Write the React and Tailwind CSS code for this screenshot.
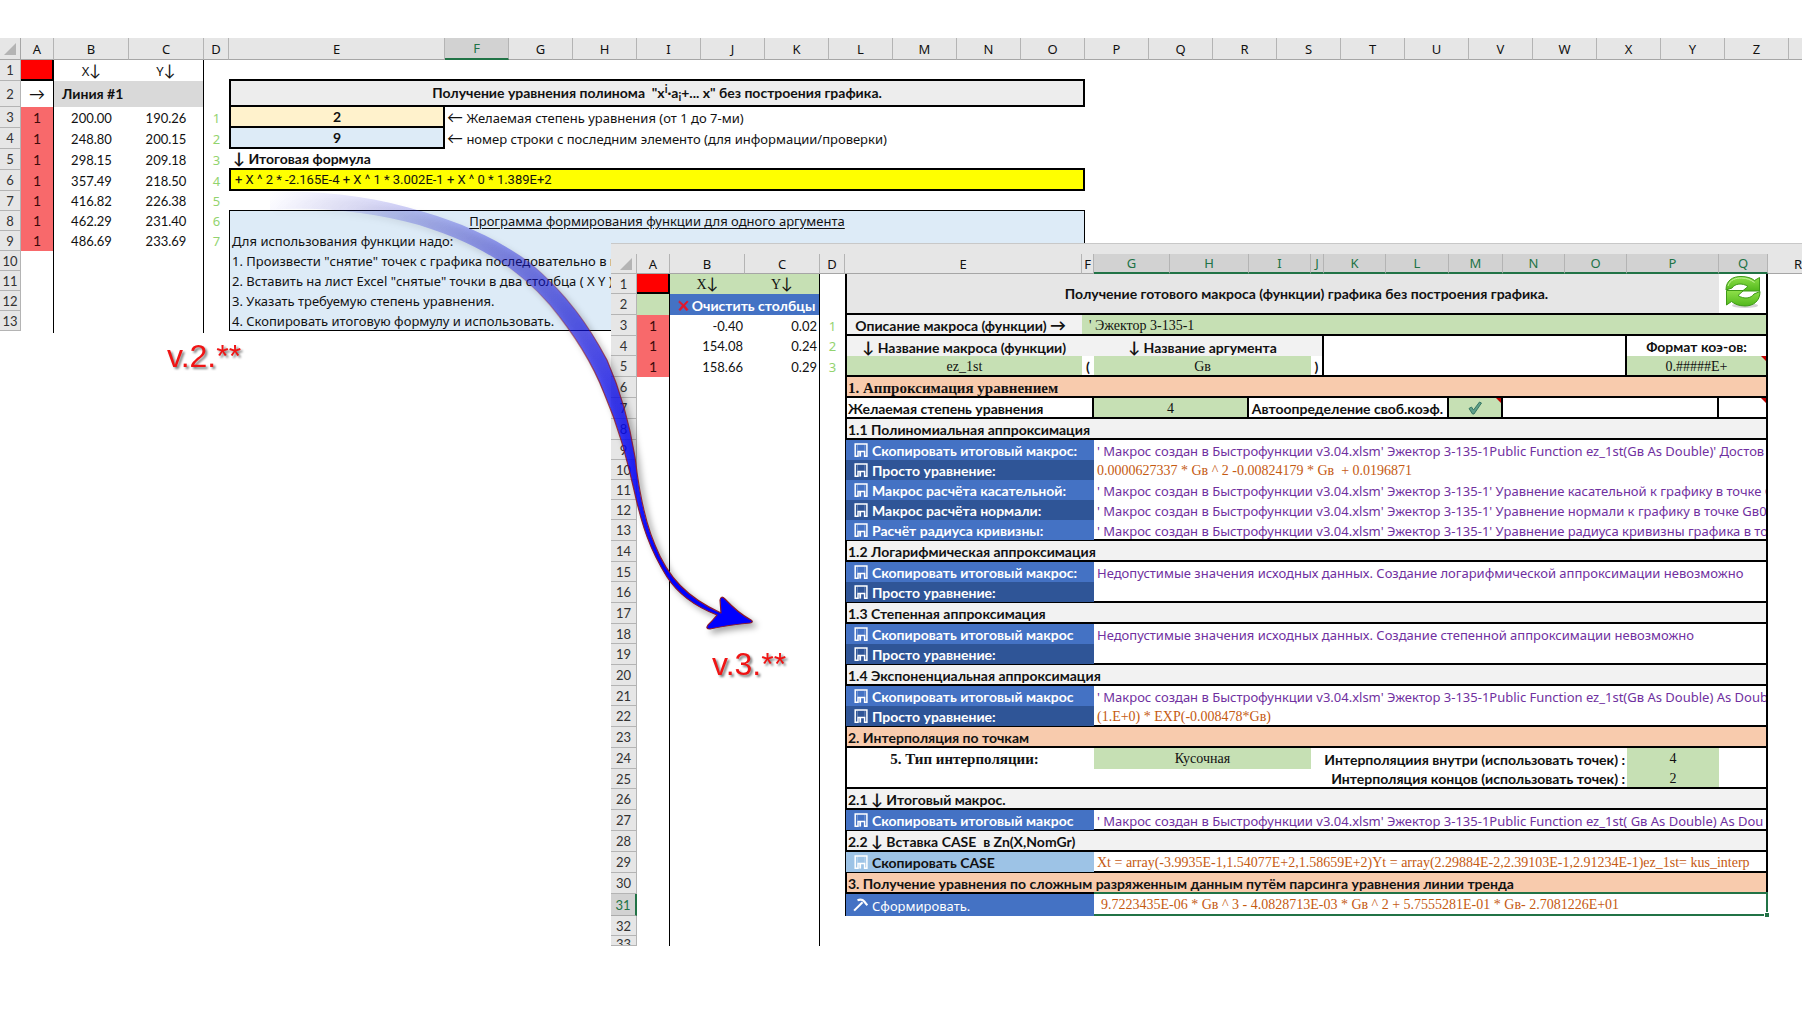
import React from "react";

const SANS = "font-['Noto_Sans','Lato',sans-serif] text-[13px]";
const BOLD = "font-['Lato','Noto_Sans',sans-serif] text-[14px] font-bold";
const NUM = "font-['Lato','Noto_Sans',sans-serif] text-[13px]";
const SERIF = "font-['Liberation_Serif',serif] text-[14px]";
const SERIF_BOLD = "font-['Liberation_Serif',serif] text-[15px] font-bold";
const K = "border-black ";

const LETTERS = "ABCDEFGHIJKLMNOPQRSTUVWXYZ".split("");

function Floppy() {
  return (
    <svg viewBox="0 0 14 14" className="h-[14px] w-[14px] shrink-0" fill="none" stroke="currentColor" aria-hidden="true">
      <path d="M4 13.200H1.200V0.900H12.900V13.200H10.600V8.600H4Z" strokeWidth="1.500" />
      <path d="M6.200 9V13.600" strokeWidth="1.800" />
      <path d="M3.400 1.500V7.800M10.800 1.500V7.800" strokeWidth="0.800" opacity="0.35" />
    </svg>
  );
}

function Hammer() {
  return (
    <svg viewBox="0 0 16 14" className="-ml-[1px] h-[14px] w-[15px] shrink-0" fill="none" stroke="currentColor" aria-hidden="true">
      <path d="M1.200 13L10.200 4" strokeWidth="2.200" />
      <path d="M4.800 2C8 0.800 10.400 1.400 12 3.200C13.200 4.800 13.800 6 15.400 7.200" strokeWidth="2.400" />
    </svg>
  );
}

function Refresh() {
  return (
    <svg viewBox="0 0 36 34" className="h-[34px] w-[36px]" aria-hidden="true">
      <defs>
        <linearGradient id="leaf" x1="0" y1="0" x2="0" y2="1">
          <stop offset="0" stopColor="#8fe04a" />
          <stop offset="1" stopColor="#52b81c" />
        </linearGradient>
      </defs>
      <ellipse cx="20" cy="30.5" rx="13" ry="2.5" fill="#d4d4d4" />
      <g fill="url(#leaf)" stroke="#3f9a18" strokeWidth="1" strokeLinejoin="round">
        <path d="M1 15C1 5 8 1.500 16 1.500C22 1.500 26.500 3 29.500 5.500L34.500 2.500V16H17.500L23 11.500C17 7.500 10 8.500 7 13Z" />
        <path d="M35 16.500C35 26.500 28 31 20 31C14 31 9.500 29 6.500 26.500L1.500 30V15.500H18.500L13 20.500C19 24.500 26 23.500 29 19Z" />
      </g>
      <path d="M3 11C5 4.500 11 3 16.500 3C22 3 26 5 29.500 7.500" fill="none" stroke="#c3f39a" strokeWidth="1" />
    </svg>
  );
}

function Note() {
  return (
    <svg viewBox="0 0 5 5" className="absolute right-0 top-0 h-[5px] w-[5px]" aria-hidden="true">
      <path d="M0 0H5V5Z" fill="#c00000" />
    </svg>
  );
}

function Corner() {
  return (
    <svg viewBox="0 0 12 12" className="ml-auto mr-1 h-[12px] w-[12px]" aria-hidden="true">
      <path d="M12 0V12H0Z" fill="#b4b4b4" />
    </svg>
  );
}

function Arr({ children }) {
  return <span className="font-['Lato'] text-[16px] leading-none">{children}</span>;
}

function RowHead({ n, h, active }) {
  return (
    <th
      scope="row"
      className={
        "relative overflow-hidden border-b border-r text-center font-normal " + NUM + " " + h +
        (active ? " border-b-[#ababab] border-r-2 border-r-[#217346] bg-[#d2d2d2] text-[#217346]" : " border-[#b4b4b4] bg-[#e6e6e6] text-[#333]")
      }
    >
      {n}
    </th>
  );
}

/* ---------- version 2 sheet ---------- */

const POINTS = [
  ["200.00", "190.26"],
  ["248.80", "200.15"],
  ["298.15", "209.18"],
  ["357.49", "218.50"],
  ["416.82", "226.38"],
  ["462.29", "231.40"],
  ["486.69", "233.69"],
];

const MARK = K + "border-r text-center font-['Lato'] text-[14px] ";

function OldSide({ n, h }) {
  const p = POINTS[n - 3];
  return (
    <>
      <RowHead n={n} h={h} />
      <td className={MARK + (p ? "bg-[#f8696b] text-[#3f0a0a]" : "")}>{p ? "1" : ""}</td>
      <td className={"text-center " + NUM}>{p && p[0]}</td>
      <td className={K + "border-r text-center " + NUM}>{p && p[1]}</td>
      <td className="text-center text-[#92d36e]">{p && n - 2}</td>
    </>
  );
}

const STEPS = [
  [9, "Для использования функции надо:"],
  [10, '1. Произвести "снятие" точек с графика последовательно в п'],
  [11, '2. Вставить на лист Excel "снятые" точки в два столбца ( X Y )'],
  [12, "3. Указать требуемую степень уравнения."],
  [13, "4. Скопировать итоговую формулу и использовать."],
];

function OldSheet() {
  return (
    <table className={"w-full table-fixed border-separate border-spacing-0 whitespace-nowrap leading-4 text-[#111] " + SANS}>
      <colgroup>
        <col className="w-[21px]" />
        <col className="w-[33px]" />
        <col className="w-[75px]" />
        <col className="w-[75px]" />
        <col className="w-[25px]" />
        <col className="w-[216px]" />
        {LETTERS.slice(5).map((l) => (
          <col key={l} className="w-[64px]" />
        ))}
        <col />
      </colgroup>
      <thead>
        <tr>
          <th className="h-[22px] border-b border-r border-[#a6a6a6] bg-[#e6e6e6]"><Corner /></th>
          {LETTERS.map((l) => (
            <th
              key={l}
              scope="col"
              className={
                "border-r text-center font-normal " +
                (l === "F" ? "border-b-2 border-b-[#217346] border-r-[#b4b4b4] bg-[#d2d2d2] text-[#217346]" : "border-b border-b-[#a6a6a6] border-r-[#b4b4b4] bg-[#e6e6e6]")
              }
            >
              {l}
            </th>
          ))}
          <th className="border-b border-[#a6a6a6] bg-[#e6e6e6]" />
        </tr>
      </thead>
      <tbody>
        <tr>
          <RowHead n={1} h="h-[21px]" />
          <td className={K + "border-b-2 border-r-2 bg-[#ff0000]"} />
          <td className="text-center">X<Arr>↓</Arr></td>
          <td className={K + "border-r text-center"}>Y<Arr>↓</Arr></td>
          <td />
          <td colSpan={11} className={K + "border-b-2"} />
        </tr>
        <tr>
          <RowHead n={2} h="h-[26px]" />
          <td className={K + "border-r text-center"}><Arr>→</Arr></td>
          <td colSpan={2} className={K + "border-r bg-[#d9d9d9] pl-2 " + BOLD}>Линия #1</td>
          <td />
          <td colSpan={11} className={K + "border-x-2 border-b-2 bg-[#ededed] text-center " + BOLD}>
            Получение уравнения полинома &nbsp;"x<sup className="text-[11px] leading-none">i</sup>·a<sub className="text-[11px] leading-none">i</sub>+... x" без построения графика.
          </td>
        </tr>
        <tr>
          <OldSide n={3} h="h-[21px]" />
          <td className={K + "border-x-2 border-b-2 bg-[#fff2cc] text-center " + BOLD}>2</td>
          <td colSpan={10} className="pl-[2px]"><Arr>←</Arr> Желаемая степень уравнения (от 1 до 7-ми)</td>
        </tr>
        <tr>
          <OldSide n={4} h="h-[21px]" />
          <td className={K + "border-x-2 border-b-2 bg-[#ddebf7] text-center " + BOLD}>9</td>
          <td colSpan={10} className="pl-[2px]"><Arr>←</Arr> номер строки с последним элементо (для информации/проверки)</td>
        </tr>
        <tr>
          <OldSide n={5} h="h-[21px]" />
          <td colSpan={11} className={K + "border-b-2 pl-1 " + BOLD}><Arr>↓</Arr> Итоговая формула</td>
        </tr>
        <tr>
          <OldSide n={6} h="h-[21px]" />
          <td colSpan={11} className={K + "border-x-2 border-b-2 bg-[#ffff00] pl-1 font-['Roboto'] text-[13px]"}>+ X ^ 2 * -2.165E-4 + X ^ 1 * 3.002E-1 + X ^ 0 * 1.389E+2</td>
        </tr>
        <tr>
          <OldSide n={7} h="h-[20px]" />
          <td colSpan={11} className={K + "border-b"} />
        </tr>
        <tr>
          <OldSide n={8} h="h-[20px]" />
          <td colSpan={11} className={K + "border-x bg-[#ddebf7] text-center underline underline-offset-2"}>Программа формирования функции для одного аргумента</td>
        </tr>
        {STEPS.map(([n, text]) => (
          <tr key={n}>
            <OldSide n={n} h="h-[20px]" />
            <td colSpan={11} className={K + "border-x bg-[#ddebf7] pl-[2px] " + (n === 13 ? "border-b" : "")}>{text}</td>
          </tr>
        ))}
        <tr>
          <td className="h-[2px]" />
          <td className={K + "border-r"} />
          <td />
          <td className={K + "border-r"} />
        </tr>
      </tbody>
    </table>
  );
}

/* ---------- version 3 sheet ---------- */

const NEW_COLS = [
  ["A", "w-[33px]"], ["B", "w-[75px]"], ["C", "w-[75px]"], ["D", "w-[25px]"],
  ["E", "w-[237px]"], ["F", "w-[12px]"], ["G", "w-[76px]"], ["H", "w-[79px]"],
  ["I", "w-[62px]"], ["J", "w-[13px]"], ["K", "w-[62px]"], ["L", "w-[63px]"],
  ["M", "w-[54px]"], ["N", "w-[62px]"], ["O", "w-[62px]"], ["P", "w-[92px]"], ["Q", "w-[49px]"],
];

const NEW_POINTS = { 3: ["-0.40", "0.02"], 4: ["154.08", "0.24"], 5: ["158.66", "0.29"] };

function Side({ n, h, active }) {
  const p = NEW_POINTS[n];
  return (
    <>
      <RowHead n={n} h={h} active={active} />
      <td className={MARK + (p ? "bg-[#f8696b] text-[#3f0a0a]" : "")}>{p ? "1" : ""}</td>
      <td className={"pr-[2px] text-right " + NUM}>{p && p[0]}</td>
      <td className={K + "border-r pr-[2px] text-right " + NUM}>{p && p[1]}</td>
      <td className="text-center text-[#92d36e]">{p && n - 2}</td>
    </>
  );
}

function Section({ n, h = "h-[21px]", tone = "bg-[#f2f2f2]", font = BOLD, children }) {
  return (
    <tr>
      <Side n={n} h={h} />
      <td colSpan={13} className={K + "border-b-2 border-l-2 border-r-2 pl-[1px] pt-[2px] " + tone + " " + font}>{children}</td>
    </tr>
  );
}

function Action({ n, h = "h-[21px]", label, tone = "bg-[#4472c4] text-white", icon, labelFont = BOLD, last, active, text, font = SANS + " text-[#7030a0]" }) {
  return (
    <tr>
      <Side n={n} h={h} active={active} />
      <td colSpan={2} className={K + "border-l " + (last ? "border-b " : "") + tone}>
        <button type="button" className={"flex h-4 w-full cursor-pointer items-center gap-[4px] overflow-hidden pl-2 text-left leading-4 " + labelFont}>
          {icon || <Floppy />}
          <span className="pt-[2px]">{label}</span>
        </button>
      </td>
      <td
        colSpan={11}
        className={
          active
            ? "relative border-b-2 border-r-2 border-[#217346] pl-[7px] pt-[2px] " + font
            : K + "overflow-hidden border-r-2 pl-[3px] pt-[2px] " + (last ? "border-b-2 " : "") + font
        }
      >
        {text}
        {active && (
          <>
            <span className="absolute -right-[2px] -top-[2px] left-0 h-[2px] bg-[#217346]" />
            <span className="absolute -bottom-[4px] -right-[4px] h-[6px] w-[6px] border border-white bg-[#217346]" />
          </>
        )}
      </td>
    </tr>
  );
}

const DARK = "bg-[#2f5597] text-white";
const ORANGE = SERIF + " text-[#c55a11]";
const MACRO = "' Макрос создан в Быстрофункции v3.04.xlsm' Эжектор 3-135-1";

function NewSheet() {
  return (
    <table className={"w-full table-fixed border-separate border-spacing-0 whitespace-nowrap bg-white leading-4 text-[#111] " + SANS}>
      <colgroup>
        <col className="w-[26px]" />
        {NEW_COLS.map(([l, w]) => (
          <col key={l} className={w} />
        ))}
        <col />
      </colgroup>
      <thead>
        <tr>
          <td colSpan={19} className="h-[11px] border-t border-[#c8c8c8] bg-[#e6e6e6]" />
        </tr>
        <tr>
          <th className="h-[20px] border-b border-r border-[#b4b4b4] bg-[#e6e6e6]"><Corner /></th>
          {NEW_COLS.map(([l], i) => (
            <th
              key={l}
              scope="col"
              className={
                "border-r text-center font-normal " +
                (i > 5 ? "border-b-2 border-b-[#217346] border-r-[#b4b4b4] bg-[#d2d2d2] text-[#217346]" : "border-b border-b-[#a6a6a6] border-r-[#b4b4b4] bg-[#e6e6e6]")
              }
            >
              {l}
            </th>
          ))}
          <th scope="col" className="overflow-hidden border-b border-[#a6a6a6] bg-[#e6e6e6] pl-[26px] text-left font-normal">R</th>
        </tr>
      </thead>
      <tbody>
        <tr>
          <RowHead n={1} h="h-[20px]" />
          <td className={K + "border-b-2 border-r-2 bg-[#ff0000]"} />
          <td className={"bg-[#c6e0b4] text-center " + SERIF}>X<Arr>↓</Arr></td>
          <td className={K + "border-r bg-[#c6e0b4] text-center " + SERIF}>Y<Arr>↓</Arr></td>
          <td />
          <td colSpan={13} rowSpan={2} className={K + "relative border-x-2 border-b-2 bg-[#e6e6e6] text-center " + BOLD}>
            Получение готового макроса (функции) графика без построения графика.
            <button type="button" aria-label="Обновить" className="absolute inset-y-0 right-0 flex w-[47px] cursor-pointer items-start justify-center bg-white pt-[1px]">
              <Refresh />
            </button>
          </td>
        </tr>
        <tr>
          <RowHead n={2} h="h-[21px]" />
          <td className={K + "border-r bg-[#c6e0b4]"} />
          <td colSpan={2} className={K + "border-r bg-[#4472c4] text-white"}>
            <button type="button" className={"flex w-full cursor-pointer items-center justify-center gap-[3px] pl-1 pt-[2px] leading-4 " + BOLD}>
              <svg viewBox="0 0 12 12" className="h-[11px] w-[11px]" aria-hidden="true">
                <path d="M1.500 1L6 5L10 1L11 2L7.500 6L11 10.500L9 11.500L6 7.500L2.500 11.500L1 10.500L4.500 6L1 2.500Z" fill="#e3182d" stroke="#e3182d" strokeWidth="0.800" />
              </svg>
              <span>Очистить столбцы</span>
            </button>
          </td>
          <td />
        </tr>
        <tr>
          <Side n={3} h="h-[21px]" />
          <td className={K + "border-b-2 border-l-2 bg-[#f2f2f2] pr-4 pt-[2px] text-right " + BOLD}>Описание макроса (функции) <Arr>→</Arr></td>
          <td colSpan={12} className={K + "border-b-2 border-r-2 bg-[#c6e0b4] pl-[7px] pt-[2px] " + SERIF}>' Эжектор 3-135-1</td>
        </tr>
        <tr>
          <Side n={4} h="h-[20px]" />
          <td className={K + "border-l-2 bg-[#f2f2f2] pr-4 pt-[2px] text-right " + BOLD}><Arr>↓</Arr> Название макроса (функции)</td>
          <td className="bg-[#f2f2f2]" />
          <td colSpan={3} className={"bg-[#f2f2f2] pt-[2px] text-center " + BOLD}><Arr>↓</Arr> Название аргумента</td>
          <td className={K + "border-r-2 bg-[#f2f2f2]"} />
          <td colSpan={5} rowSpan={2} className={K + "border-b-2 border-r-2"} />
          <td colSpan={2} className={K + "border-r-2 pt-[2px] text-center " + BOLD}>Формат коэ-ов:</td>
        </tr>
        <tr>
          <Side n={5} h="h-[21px]" />
          <td className={K + "border-b-2 border-l-2 bg-[#c6e0b4] pt-[2px] text-center " + SERIF}>ez_1st</td>
          <td className={K + "border-b-2 pt-[2px] text-center " + BOLD}>(</td>
          <td colSpan={3} className={K + "border-b-2 bg-[#c6e0b4] pt-[2px] text-center " + SERIF}>Gв</td>
          <td className={K + "border-b-2 border-r-2 pt-[2px] text-center " + BOLD}>)</td>
          <td colSpan={2} className={K + "relative border-b-2 border-r-2 bg-[#c6e0b4] pt-[2px] text-center " + SERIF}>0.#####E+<Note /></td>
        </tr>
        <Section n={6} tone="bg-[#f8cbad]" font={SERIF_BOLD}>1. Аппроксимация уравнением</Section>
        <tr>
          <Side n={7} h="h-[21px]" />
          <td colSpan={2} className={K + "border-b-2 border-l-2 border-r-2 pl-[1px] pt-[2px] " + BOLD}>Желаемая степень уравнения</td>
          <td colSpan={2} className={K + "border-b-2 border-r-2 bg-[#c6e0b4] pt-[2px] text-center " + SERIF}>4</td>
          <td colSpan={4} className={K + "border-b-2 border-r-2 pr-1 pt-[2px] text-right " + BOLD}>
            <label htmlFor="auto-free">Автоопределение своб.коэф.</label>
          </td>
          <td className={K + "relative border-b-2 border-r-2 bg-[#c6e0b4]"}>
            <span className="grid h-4 place-items-center">
              <input id="auto-free" type="checkbox" defaultChecked className="peer col-start-1 row-start-1 h-[14px] w-[14px] cursor-pointer appearance-none" />
              <svg viewBox="0 0 14 14" className="pointer-events-none invisible col-start-1 row-start-1 h-[14px] w-[14px] peer-checked:visible" aria-hidden="true">
                <path d="M1 7.500L3.500 6L5.500 9L11.500 1L13.500 2L6 13H4.500Z" fill="#5fa08a" stroke="#2f6f5e" strokeWidth="0.900" strokeLinejoin="round" />
              </svg>
            </span>
            <Note />
          </td>
          <td colSpan={3} className={K + "border-b-2 border-r-2"} />
          <td className={K + "relative border-b-2 border-r-2"}><Note /></td>
        </tr>
        <Section n={8}>1.1 Полиномиальная аппроксимация</Section>
        <Action n={9} h="h-[20px]" label="Скопировать итоговый макрос:" text={MACRO + "Public Function ez_1st(Gв As Double)' Достов"} />
        <Action n={10} h="h-[20px]" tone={DARK} label="Просто уравнение:" font={ORANGE} text={<>0.0000627337 * Gв ^ 2 -0.00824179 * Gв &nbsp;+ 0.0196871</>} />
        <Action n={11} h="h-[20px]" label="Макрос расчёта касательной:" text={MACRO + "' Уравнение касательной к графику в точке G"} />
        <Action n={12} h="h-[20px]" tone={DARK} label="Макрос расчёта нормали:" text={MACRO + "' Уравнение нормали к графику в точке Gв0P"} />
        <Action n={13} last label="Расчёт радиуса кривизны:" text={MACRO + "' Уравнение радиуса кривизны графика в точ"} />
        <Section n={14}>1.2 Логарифмическая аппроксимация</Section>
        <Action n={15} h="h-[20px]" label="Скопировать итоговый макрос:" text="Недопустимые значения исходных данных. Создание логарифмической аппроксимации невозможно" />
        <Action n={16} last tone={DARK} label="Просто уравнение:" />
        <Section n={17}>1.3 Степенная аппроксимация</Section>
        <Action n={18} h="h-[20px]" label="Скопировать итоговый макрос" text="Недопустимые значения исходных данных. Создание степенной аппроксимации невозможно" />
        <Action n={19} last tone={DARK} label="Просто уравнение:" />
        <Section n={20}>1.4 Экспоненциальная аппроксимация</Section>
        <Action n={21} h="h-[20px]" label="Скопировать итоговый макрос" text={MACRO + "Public Function ez_1st(Gв As Double) As Doub"} />
        <Action n={22} last tone={DARK} label="Просто уравнение:" font={ORANGE} text="(1.E+0) * EXP(-0.008478*Gв)" />
        <Section n={23} tone="bg-[#f8cbad]">2. Интерполяция по точкам</Section>
        <tr>
          <Side n={24} h="h-[21px]" />
          <td className={K + "border-l-2 text-center " + SERIF_BOLD}>5. Тип интерполяции:</td>
          <td />
          <td colSpan={3} className={"bg-[#c6e0b4] text-center " + SERIF}>Кусочная</td>
          <td colSpan={6} className={"pr-[2px] pt-[2px] text-right " + BOLD}>Интерполяциия внутри (использовать точек) :</td>
          <td className={"bg-[#c6e0b4] text-center " + SERIF}>4</td>
          <td className={K + "border-r-2"} />
        </tr>
        <tr>
          <Side n={25} h="h-[20px]" />
          <td className={K + "border-b-2 border-l-2"} />
          <td colSpan={10} className={K + "border-b-2 pr-[2px] pt-[2px] text-right " + BOLD}>Интерполяция концов (использовать точек) :</td>
          <td className={K + "border-b-2 bg-[#c6e0b4] pt-[2px] text-center " + SERIF}>2</td>
          <td className={K + "border-b-2 border-r-2"} />
        </tr>
        <Section n={26}>2.1 <Arr>↓</Arr> Итоговый макрос.</Section>
        <Action n={27} last label="Скопировать итоговый макрос" text={MACRO + "Public Function ez_1st( Gв As Double) As Dou"} />
        <Section n={28}>2.2 <Arr>↓</Arr> Вставка CASE &nbsp;в Zn(X,NomGr)</Section>
        <Action
          n={29}
          last
          tone="bg-[#9dc3e6] text-white"
          label={<span className="text-[#111]">Скопировать CASE</span>}
          font={ORANGE}
          text="Xt = array(-3.9935E-1,1.54077E+2,1.58659E+2)Yt = array(2.29884E-2,2.39103E-1,2.91234E-1)ez_1st= kus_interp"
        />
        <Section n={30} tone="bg-[#f8cbad]">3. Получение уравнения по сложным разряженным данным путём парсинга уравнения линии тренда</Section>
        <Action n={31} h="h-[22px]" active icon={<Hammer />} labelFont={SANS} label="Сформировать." font={ORANGE} text="9.7223435E-06 * Gв ^ 3 - 4.0828713E-03 * Gв ^ 2 + 5.7555281E-01 * Gв- 2.7081226E+01" />
        <tr>
          <Side n={32} h="h-[20px]" />
        </tr>
        <tr>
          <Side n={<span className="block h-[9px] overflow-hidden">33</span>} h="h-[10px]" />
        </tr>
      </tbody>
    </table>
  );
}

/* ---------- arrow from the old sheet to the new one ---------- */

function Arrow() {
  return (
    <svg width="800" height="700" viewBox="0 0 800 700" className="pointer-events-none absolute left-0 top-0 drop-shadow-[4px_4px_3px_rgba(0,0,0,0.35)]" aria-hidden="true">
      <defs>
        <linearGradient id="fade" gradientUnits="userSpaceOnUse" x1="270" y1="190" x2="660" y2="560">
          <stop offset="0" stopColor="#1414ee" stopOpacity="0" />
          <stop offset="0.15" stopColor="#1414d8" stopOpacity="0.14" />
          <stop offset="0.38" stopColor="#1818e0" stopOpacity="0.4" />
          <stop offset="0.6" stopColor="#1010f0" stopOpacity="0.62" />
          <stop offset="0.8" stopColor="#0808fa" stopOpacity="0.8" />
          <stop offset="1" stopColor="#0000ff" stopOpacity="1" />
        </linearGradient>
        <linearGradient id="edge" gradientUnits="userSpaceOnUse" x1="270" y1="190" x2="660" y2="560">
          <stop offset="0.4" stopColor="#8b1a2a" stopOpacity="0" />
          <stop offset="0.7" stopColor="#8b1a2a" stopOpacity="0.8" />
          <stop offset="1" stopColor="#8b1a2a" stopOpacity="1" />
        </linearGradient>
      </defs>
      <path
        d="M270 192C322 190 374 196 424 212C466 224 502 242 529 262C567 294 589 326 607 360C621 392 630 426 635 457C640 500 646 524 655 545C668 578 688 598 721 613L720 600Q721 595 725 599Q738 613 751 620Q754 622 750 623Q728 625 710 629Q705 629 708 625Q713 620 717 615C694 606 678 594 667 577C650 550 642 526 634 490C626 456 619 428 604 393C592 362 574 334 550 305C520 270 480 244 419 225C370 212 320 206 270 210Z"
        fill="url(#fade)"
        stroke="url(#edge)"
        strokeWidth="1.200"
        strokeLinejoin="round"
      />
    </svg>
  );
}

function Version({ at, children }) {
  return (
    <p className={"absolute font-['Liberation_Sans',sans-serif] text-[32px] leading-8 text-[#f01414] drop-shadow-[2px_2px_1px_rgba(0,0,0,0.5)] " + at}>{children}</p>
  );
}

export default function App() {
  return (
    <main className="relative grid min-h-screen grid-cols-[minmax(0,1fr)] items-start overflow-hidden bg-white">
      <section aria-label="v.2" className="col-start-1 row-start-1 pt-[38px]">
        <OldSheet />
      </section>
      <section aria-label="v.3" className="relative col-start-1 row-start-1 ml-[611px] mt-[243px]">
        <NewSheet />
      </section>
      <Arrow />
      <Version at="left-[167px] top-[340px]">v.2.**</Version>
      <Version at="left-[712px] top-[648px]">v.3.**</Version>
    </main>
  );
}
